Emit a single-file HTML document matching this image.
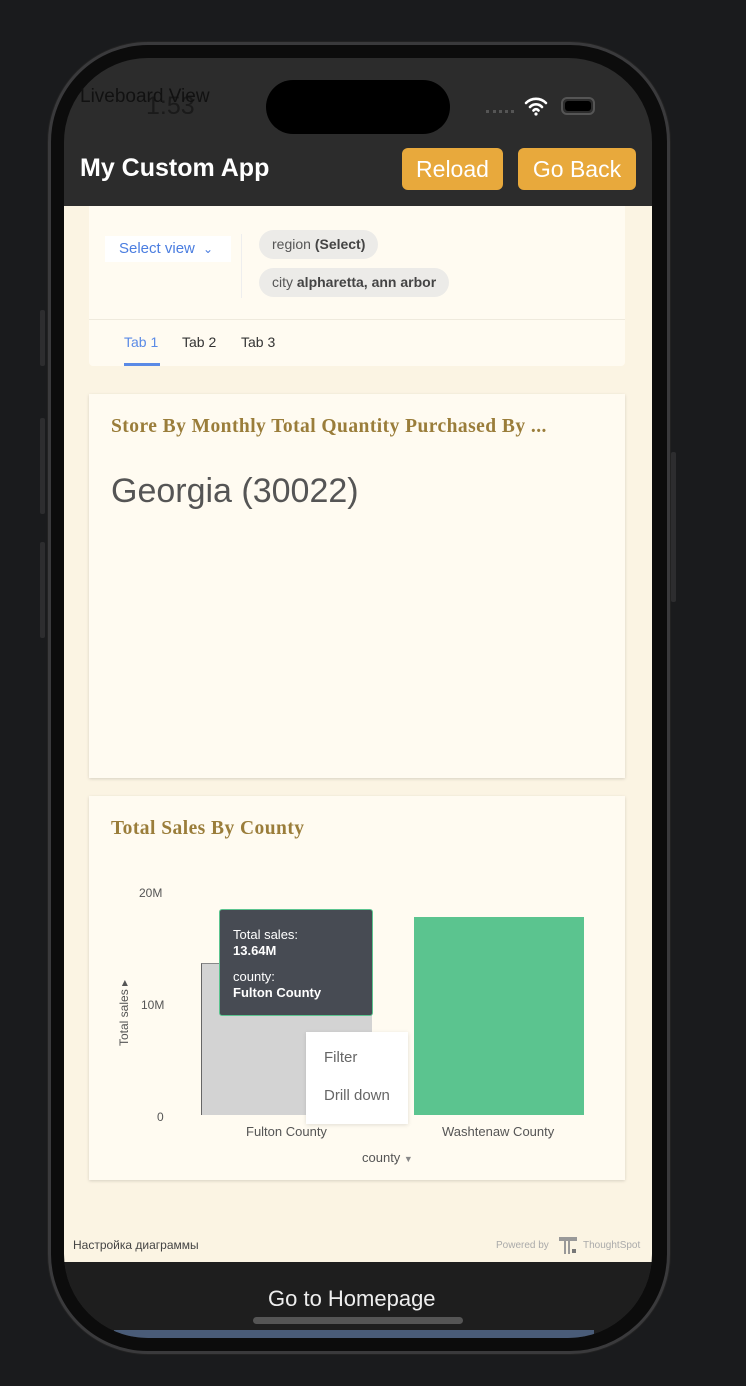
<!DOCTYPE html>
<html><head><meta charset="utf-8"><style>
*{margin:0;padding:0;box-sizing:border-box}
body{width:746px;height:1386px;background:#1a1b1d;position:relative;overflow:hidden;font-family:"Liberation Sans","DejaVu Sans",sans-serif}
.a{position:absolute}
.frame{left:48px;top:42px;width:622px;height:1312px;border-radius:100px;background:#0c0c0c;border:3px solid #3a3a3c;box-shadow:0 0 0 1px #222}
.screen{left:64px;top:58px;width:588px;height:1280px;border-radius:84px;overflow:hidden;background:#2c2c2c}
.card{background:#fffbf1;box-shadow:0 1px 3px rgba(0,0,0,.15)}
.btn{background:#e8a93c;color:#fff;border-radius:6px;font-size:23px;text-align:center;line-height:42px;height:42px}
.pill{background:#ecebe8;border-radius:15px;height:29px;line-height:29px;font-size:14px;color:#555;padding:0 13px}
.pill b{color:#444}
.title{font-family:"Liberation Serif",serif;font-weight:bold;color:#9a7d3a;font-size:19.5px;letter-spacing:0.45px}
.gl{font-size:12px;color:#555}
</style></head><body>
<div class="a" style="left:40px;top:310px;width:5px;height:56px;background:#2d2d2f;border-radius:2px"></div>
<div class="a" style="left:40px;top:418px;width:5px;height:96px;background:#2d2d2f;border-radius:2px"></div>
<div class="a" style="left:40px;top:542px;width:5px;height:96px;background:#2d2d2f;border-radius:2px"></div>
<div class="a" style="left:671px;top:452px;width:5px;height:150px;background:#2d2d2f;border-radius:2px"></div>
<div class="a frame"></div>
<div class="a screen">
 <div class="a" style="left:0;top:148px;width:588px;height:1056px;background:#fbf4e3"></div>
 <div class="a" style="left:0;top:1204px;width:588px;height:76px;background:#1e1e1e"></div>
 <div class="a" style="left:50px;top:1272px;width:480px;height:8px;background:#4a5c78"></div>
</div>
<div class="a" style="left:266px;top:80px;width:184px;height:54px;border-radius:27px;background:#000"></div>
<div class="a" style="left:146px;top:92px;font-size:25px;color:#1a1a1a">1:53</div>
<div class="a" style="left:80px;top:86px;font-size:19px;color:#111">Liveboard View</div>
<div class="a" style="left:486px;top:110px;width:28px;height:3px;border-top:3px dotted #555"></div>
<svg class="a" style="left:524px;top:96px" width="24" height="20" viewBox="0 0 24 20"><path d="M2 7a14 14 0 0 1 20 0M6 11a8 8 0 0 1 12 0M9.5 14.5a3 3 0 0 1 5 0" stroke="#fff" stroke-width="2.6" fill="none" stroke-linecap="round"/><circle cx="12" cy="18" r="1.6" fill="#fff"/></svg>
<div class="a" style="left:561px;top:97px;width:34px;height:18px;border:2px solid #555;border-radius:6px;padding:2px"><div style="width:100%;height:100%;background:#000;border-radius:3px"></div></div>
<div class="a" style="left:80px;top:154px;font-size:25px;font-weight:bold;color:#fff">My Custom App</div>
<div class="a btn" style="left:402px;top:148px;width:101px">Reload</div>
<div class="a btn" style="left:518px;top:148px;width:118px">Go Back</div>

<div class="a card" style="left:89px;top:206px;width:536px;height:160px;box-shadow:none;border-radius:0 0 4px 4px"></div>
<div class="a" style="left:89px;top:319px;width:536px;height:1px;background:#efeadd"></div>
<div class="a" style="left:105px;top:236px;width:126px;height:26px;background:#fff"></div>
<div class="a" style="left:119px;top:240px;font-size:15px;color:#4a7de0">Select view <span style="font-size:12px;margin-left:4px">&#8964;</span></div>
<div class="a" style="left:241px;top:234px;width:1px;height:64px;background:#eee"></div>
<div class="a pill" style="left:259px;top:230px">region <b>(Select)</b></div>
<div class="a pill" style="left:259px;top:268px">city <b>alpharetta, ann arbor</b></div>
<div class="a" style="left:124px;top:334px;font-size:14px;color:#5a8ae6">Tab 1</div>
<div class="a" style="left:124px;top:363px;width:36px;height:3px;background:#5a8ae6"></div>
<div class="a" style="left:182px;top:334px;font-size:14px;color:#333">Tab 2</div>
<div class="a" style="left:241px;top:334px;font-size:14px;color:#333">Tab 3</div>

<div class="a card" style="left:89px;top:394px;width:536px;height:384px"></div>
<div class="a title" style="left:111px;top:416px">Store By Monthly Total Quantity Purchased By ...</div>
<div class="a" style="left:111px;top:472px;font-size:34px;color:#555">Georgia (30022)</div>

<div class="a card" style="left:89px;top:796px;width:536px;height:384px"></div>
<div class="a title" style="left:111px;top:818px">Total Sales By County</div>
<div class="a gl" style="left:139px;top:886px">20M</div>
<div class="a gl" style="left:141px;top:998px">10M</div>
<div class="a gl" style="left:157px;top:1110px">0</div>
<div class="a gl" style="left:117px;top:1046px;transform:rotate(-90deg);transform-origin:0 0;white-space:nowrap">Total sales &#9656;</div>
<div class="a" style="left:201px;top:963px;width:171px;height:152px;background:#d3d3d3;border-left:1px solid #666;border-top:1px solid #888"></div>
<div class="a" style="left:414px;top:917px;width:170px;height:198px;background:#5bc48f"></div>
<div class="a" style="left:219px;top:909px;width:154px;height:107px;background:#474b53;border:1px solid #5bc48f;border-radius:3px;color:#fff;font-size:13px;padding:17px 0 0 13px;line-height:16px">Total sales:<br><b>13.64M</b><div style="height:10px"></div>county:<br><b>Fulton County</b></div>
<div class="a" style="left:306px;top:1032px;width:102px;height:92px;background:#fff;box-shadow:0 1px 4px rgba(0,0,0,.12)"></div>
<div class="a" style="left:324px;top:1049px;font-size:15px;color:#666">Filter</div>
<div class="a" style="left:324px;top:1087px;font-size:15px;color:#666">Drill down</div>
<div class="a" style="left:246px;top:1124px;font-size:13px;color:#555">Fulton County</div>
<div class="a" style="left:442px;top:1124px;font-size:13px;color:#555">Washtenaw County</div>
<div class="a" style="left:362px;top:1150px;font-size:13px;color:#555">county <span style="font-size:9px;color:#888">&#9660;</span></div>

<div class="a" style="left:73px;top:1238px;font-size:12px;color:#444">Настройка диаграммы</div>
<div class="a" style="left:496px;top:1240px;font-size:10px;color:#aaa">Powered by</div>
<div class="a" style="left:559px;top:1237px;width:18px;height:4px;background:#999"></div>
<div class="a" style="left:564px;top:1241px;width:2px;height:13px;background:#999"></div>
<div class="a" style="left:568px;top:1241px;width:2px;height:13px;background:#999"></div>
<div class="a" style="left:572px;top:1249px;width:4px;height:4px;background:#777"></div>
<div class="a" style="left:583px;top:1240px;font-size:10px;color:#aaa">ThoughtSpot</div>
<div class="a" style="left:268px;top:1286px;font-size:22px;color:#eee">Go to Homepage</div>
<div class="a" style="left:253px;top:1317px;width:210px;height:7px;border-radius:4px;background:#555"></div>
</body></html>
